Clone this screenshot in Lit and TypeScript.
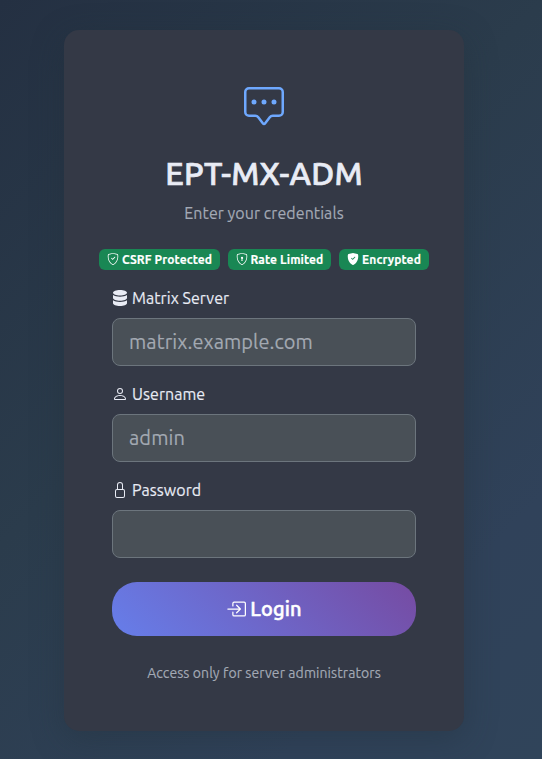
import { LitElement, html, svg, css } from "lit";
import { customElement } from "lit/decorators.js";

const paths: Record<string, string[]> = {
  chat: [
    "M14 1a1 1 0 0 1 1 1v8a1 1 0 0 1-1 1h-2.5a2 2 0 0 0-1.6.8L8 14.333 6.1 11.8a2 2 0 0 0-1.6-.8H2a1 1 0 0 1-1-1V2a1 1 0 0 1 1-1zM2 0a2 2 0 0 0-2 2v8a2 2 0 0 0 2 2h2.5a1 1 0 0 1 .8.4l1.9 2.533a1 1 0 0 0 1.6 0l1.9-2.533a1 1 0 0 1 .8-.4H14a2 2 0 0 0 2-2V2a2 2 0 0 0-2-2z",
    "M5 6a1 1 0 1 1-2 0 1 1 0 0 1 2 0m4 0a1 1 0 1 1-2 0 1 1 0 0 1 2 0m4 0a1 1 0 1 1-2 0 1 1 0 0 1 2 0",
  ],
  shield: [
    "M5.338 1.59a61 61 0 0 0-2.837.856.48.48 0 0 0-.328.39c-.554 4.157.726 7.19 2.253 9.188a10.7 10.7 0 0 0 2.287 2.233c.346.244.652.42.893.533q.18.085.293.118a1 1 0 0 0 .101.025 1 1 0 0 0 .1-.025q.114-.034.294-.118c.24-.113.547-.29.893-.533a10.7 10.7 0 0 0 2.287-2.233c1.527-1.997 2.807-5.031 2.253-9.188a.48.48 0 0 0-.328-.39c-.651-.213-1.75-.56-2.837-.855C9.552 1.29 8.531 1.067 8 1.067c-.53 0-1.552.223-2.662.524zM5.072.56C6.157.265 7.31 0 8 0s1.843.265 2.928.56c1.11.3 2.229.655 2.887.87a1.54 1.54 0 0 1 1.044 1.262c.596 4.477-.787 7.795-2.465 9.99a11.8 11.8 0 0 1-2.517 2.453 7 7 0 0 1-1.048.625c-.28.132-.581.24-.829.24s-.548-.108-.829-.24a7 7 0 0 1-1.048-.625 11.8 11.8 0 0 1-2.517-2.453C1.928 10.487.545 7.169 1.141 2.692A1.54 1.54 0 0 1 2.185 1.43 63 63 0 0 1 5.072.56",
  ],
  check: ["M10.854 5.146a.5.5 0 0 1 0 .708l-3 3a.5.5 0 0 1-.708 0l-1.5-1.5a.5.5 0 1 1 .708-.708L7.5 7.793l2.646-2.647a.5.5 0 0 1 .708 0"],
  keyhole: ["M9.5 6.5a1.5 1.5 0 0 1-1 1.415l.385 1.99a.5.5 0 0 1-.491.595h-.788a.5.5 0 0 1-.49-.595l.384-1.99a1.5 1.5 0 1 1 2-1.415"],
  shieldFill: [
    "M8 0c-.69 0-1.843.265-2.928.56-1.11.3-2.229.655-2.887.87a1.54 1.54 0 0 0-1.044 1.262c-.596 4.477.787 7.795 2.465 9.99a11.8 11.8 0 0 0 2.517 2.453c.386.273.744.482 1.048.625.28.132.581.24.829.24s.548-.108.829-.24a7 7 0 0 0 1.048-.625 11.8 11.8 0 0 0 2.517-2.453c1.678-2.195 3.061-5.513 2.465-9.99a1.54 1.54 0 0 0-1.044-1.263 63 63 0 0 0-2.887-.87C9.843.266 8.69 0 8 0m2.146 5.146a.5.5 0 0 1 .708.708l-3 3a.5.5 0 0 1-.708 0l-1.5-1.5a.5.5 0 1 1 .708-.708L7.5 7.793z",
  ],
  database: [
    "M8 0C4.1 0 1 1.2 1 2.8S4.1 5.6 8 5.6s7-1.2 7-2.8S11.9 0 8 0",
    "M1 5v3c0 1.6 3.1 2.8 7 2.8s7-1.2 7-2.8V5c-1.5 1.2-4.2 1.7-7 1.7S2.5 6.2 1 5",
    "M1 10.2v3C1 14.8 4.1 16 8 16s7-1.2 7-2.8v-3c-1.5 1.2-4.2 1.7-7 1.7s-5.5-.5-7-1.7",
  ],
  person: ["M8 8a3 3 0 1 0 0-6 3 3 0 0 0 0 6m2-3a2 2 0 1 1-4 0 2 2 0 0 1 4 0m4 8c0 1-1 1-1 1H3s-1 0-1-1 1-4 6-4 6 3 6 4m-1-.004c-.001-.246-.154-.986-.832-1.664C11.516 10.68 10.289 10 8 10s-3.516.68-4.168 1.332c-.678.678-.83 1.418-.832 1.664z"],
  lock: ["M8 1a2 2 0 0 1 2 2v4H6V3a2 2 0 0 1 2-2m3 6V3a3 3 0 0 0-6 0v4a2 2 0 0 0-2 2v5a2 2 0 0 0 2 2h6a2 2 0 0 0 2-2V9a2 2 0 0 0-2-2M5 8h6a1 1 0 0 1 1 1v5a1 1 0 0 1-1 1H5a1 1 0 0 1-1-1V9a1 1 0 0 1 1-1"],
  enter: [
    "M6 3.5a.5.5 0 0 1 .5-.5h8a.5.5 0 0 1 .5.5v9a.5.5 0 0 1-.5.5h-8a.5.5 0 0 1-.5-.5v-2a.5.5 0 0 0-1 0v2A1.5 1.5 0 0 0 6.5 14h8a1.5 1.5 0 0 0 1.5-1.5v-9A1.5 1.5 0 0 0 14.5 2h-8A1.5 1.5 0 0 0 5 3.5v2a.5.5 0 0 0 1 0z",
    "M11.854 8.354a.5.5 0 0 0 0-.708l-3-3a.5.5 0 1 0-.708.708L10.293 7.5H1.5a.5.5 0 0 0 0 1h8.793l-2.147 2.146a.5.5 0 0 0 .708.708z",
  ],
};

const icon = (...names: string[]) => html`<svg class="icon" viewBox="0 0 16 16" fill="currentColor" aria-hidden="true">
  ${names.flatMap((n) => paths[n]).map((d) => svg`<path fill-rule="evenodd" d=${d}></path>`)}
</svg>`;

@customElement("app-root")
export class AppRoot extends LitElement {
  static styles = css`
    :host {
      display: block;
      box-sizing: border-box;
      height: 759px;
      padding: 30px 78px 28px 64px;
      overflow: hidden;
      color: #e9ecf5;
      font: 16px/24px Ubuntu, "Noto Sans", sans-serif;
      letter-spacing: 0.06px;
      -webkit-text-stroke: 0.15px currentColor;
      background: linear-gradient(135deg, #243042 0%, #2b3c4c 42%, #30425a 80%, #30445a 100%);
    }
    * { box-sizing: border-box; }
    .icon { display: block; width: 1em; height: 1em; flex: none; }
    .card {
      height: 701px;
      padding: 57px 48px 0;
      border-radius: 15px;
      background: #343946;
      box-shadow: 0 8px 32px rgba(32, 48, 58, 0.4);
      display: flex;
      flex-direction: column;
      align-items: center;
      white-space: nowrap;
    }
    .logo { font-size: 40px; color: #6ea8fe; }
    h1 {
      margin: 26px 0 0; font-size: 32px; line-height: 40px; font-weight: 500;
      letter-spacing: 0.26px; -webkit-text-stroke-width: 0.7px;
    }
    .sub { margin: 8px 0 0; color: #a3a9b5; }
    .badges { display: flex; gap: 8px; margin-top: 24px; }
    .badge {
      display: flex; align-items: center; justify-content: center; gap: 3px;
      height: 21px; border-radius: 6px; background: #198754; color: #fff;
      font-size: 12px; line-height: 21px; font-weight: 700; letter-spacing: 0.1px;
    }
    .badge .icon { margin-top: -1px; }
    .csrf { width: 121px; }
    .rate { width: 103px; }
    .enc { width: 90px; }
    form { width: 100%; margin-top: 16px; display: flex; flex-direction: column; }
    label { display: flex; align-items: center; gap: 4px; height: 24px; }
    input {
      width: 100%; height: 48px; margin: 8px 0 16px; padding: 0 16px 2px;
      border: 1px solid #6c757d; border-radius: 8px; background: #495057;
      color: #e9ecf5; font: 20px Ubuntu, "Noto Sans", sans-serif; letter-spacing: 0.08px; outline: none;
    }
    input::placeholder { color: #a3a9b2; opacity: 1; }
    button {
      display: flex; align-items: center; justify-content: center; gap: 4px;
      height: 54px; margin-top: 8px; padding: 0; border: 0; border-radius: 25px;
      color: #fff; font: 500 20px/30px Ubuntu, "Noto Sans", sans-serif;
      letter-spacing: 0.2px; -webkit-text-stroke: 0.5px #fff;
      background: linear-gradient(45deg, #667eea, #764ba2);
    }
    button .icon { margin-top: -1px; }
    .note { margin: 27px 0 0; font-size: 14px; line-height: 21px; color: #a3a9b5; letter-spacing: 0.08px; }
    .sub, .note { -webkit-text-stroke-color: #a3a9b5; }
  `;

  private field(name: string, iconName: string, text: string, placeholder: string, type = "text") {
    return html`<label for=${name}>${icon(iconName)}<span>${text}</span></label>
      <input id=${name} type=${type} placeholder=${placeholder} />`;
  }

  render() {
    return html`<main class="card">
      <div class="logo">${icon("chat")}</div>
      <h1>EPT-MX-ADM</h1>
      <p class="sub">Enter your credentials</p>
      <div class="badges">
        <span class="badge csrf">${icon("shield", "check")}<span>CSRF Protected</span></span>
        <span class="badge rate">${icon("shield", "keyhole")}<span>Rate Limited</span></span>
        <span class="badge enc">${icon("shieldFill")}<span>Encrypted</span></span>
      </div>
      <form>
        ${this.field("server", "database", "Matrix Server", "matrix.example.com")}
        ${this.field("user", "person", "Username", "admin")}
        ${this.field("pass", "lock", "Password", "", "password")}
        <button type="button">${icon("enter")}<span>Login</span></button>
      </form>
      <p class="note">Access only for server administrators</p>
    </main>`;
  }
}
